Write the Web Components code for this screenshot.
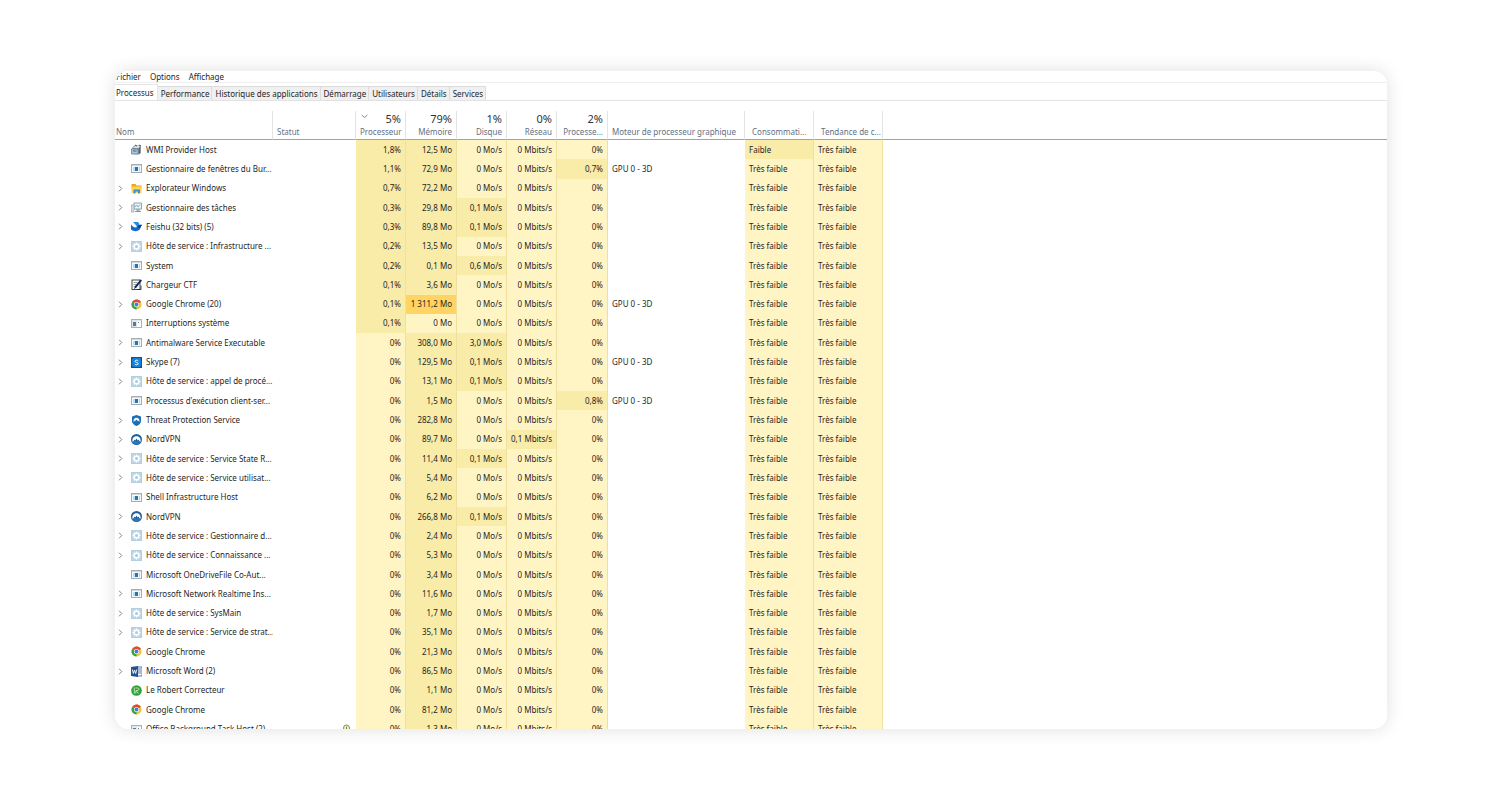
<!DOCTYPE html>
<html lang="fr">
<head>
<meta charset="utf-8">
<title>Gestionnaire des tâches</title>
<style>
  html, body { margin: 0; background: #fff; }
  body { font-family: "Noto Sans", "Open Sans", sans-serif; font-size: 8px; line-height: 12px; color: #1f1f1f; }
</style>
</head>
<body>
<task-manager>
  <menu-bar slot="menu"></menu-bar>
  <tab-strip slot="tabs"></tab-strip>
  <process-table></process-table>
</task-manager>

<script>
class TaskManager extends HTMLElement {
  constructor() {
    super();
    this.attachShadow({ mode: 'open' }).innerHTML = `
      <style>
        :host { display: flex; box-sizing: border-box; height: 100vh; padding: 71px 113px 71px 115px; }
        main { flex: 1; min-width: 0; display: flex; flex-direction: column; overflow: hidden;
               background: #fff; border-radius: 14px; }
        .shadow { flex: 1; min-width: 0; display: flex; border-radius: 14px;
                  box-shadow: 0 0 18px rgba(0, 0, 0, .13); }
      </style>
      <div class="shadow"><main>
        <slot name="menu"></slot>
        <slot name="tabs"></slot>
        <slot></slot>
      </main></div>`;
  }
}

class MenuBar extends HTMLElement {
  constructor() {
    super();
    this.attachShadow({ mode: 'open' }).innerHTML = `
      <style>
        :host { display: block; flex: none; border-bottom: 1px solid #efefef; }
        nav { display: flex; gap: 9px; height: 11px; padding-left: 1px; }
        button { all: unset; line-height: 10px; }
      </style>
      <nav><button>Fichier</button><button>Options</button><button>Affichage</button></nav>`;
  }
}

class TabStrip extends HTMLElement {
  constructor() {
    super();
    const tabs = ['Processus', 'Performance', 'Historique des applications', 'Démarrage', 'Utilisateurs', 'Détails', 'Services'];
    this.attachShadow({ mode: 'open' }).innerHTML = `
      <style>
        :host { display: block; flex: none; border-bottom: 1px solid #e2e2e2; }
        div { display: flex; align-items: flex-end; height: 17px; }
        button { all: unset; box-sizing: border-box; height: 14px; line-height: 12px; padding: 0 2px 0 3px;
                 background: #f0f0f0; border: solid #dcdcdc; border-width: 1px 1px 0 0; white-space: nowrap; }
        button[aria-selected=true] { height: 16px; padding: 0 3px 0 1px; background: #fff; border-color: #e6e6e6; }
      </style>
      <div role="tablist">${tabs.map((t, i) => `<button role="tab" aria-selected="${i === 0}">${t}</button>`).join('')}</div>`;
  }
}

const ICONS = {
  app: `<rect x=".5" y="1.500" width="10" height="8" fill="#f7f8f9" stroke="#a3adb6"/><path d="M1 2h9v1H1z" fill="#d3d9de"/><path d="M2 4h2v4H2z" fill="#c6dcea"/><path d="M4 4h3v4H4z" fill="#1879bf"/><path d="M8 4h1v4H8z" fill="#c2ccd4"/>`,
  idle: `<rect x=".5" y="1.500" width="10" height="8" fill="#e3e8ec" stroke="#a9b2b9"/><path d="M2 4h3v4H2z" fill="#587a96"/><path d="M6 3h4v6H6z" fill="#fff"/><path d="M7 4h1v1H7z" fill="#6d8190"/>`,
  wmi: `<path d="M1 4l3-3 6 0v8l-2 1.500-7-.5z" fill="#8b97a1"/><path d="M2 4l3-2.500 4.500 0L7.500 4z" fill="#dbe2e7"/><path d="M.5 5h6.500v5H.5z" fill="#a9c6d9" stroke="#5d7382" stroke-width=".7"/><path d="M2 7h3.500M8.500 3.500v6" stroke="#3c4f5d" stroke-width=".8"/><path d="M4 1l2 1M8 1l2 1" stroke="#44535e" stroke-width=".9"/>`,
  folder: `<path d="M.5 1h4l1 1.500h5V6h-10z" fill="#e8a91c"/><path d="M.5 3.500h10V10H.5z" fill="#ffd35a"/><path d="M2.500 10.500V6.500h6.500v4H7V8.500H4.500v2z" fill="#3f8fd0"/>`,
  taskmgr: `<rect x="3" y="1" width="7.500" height="6" fill="#eaf3f8" stroke="#7a929f" stroke-width=".8"/><path d="M4 5l1.500-2 1.500 2L9 2.500" fill="none" stroke="#5b98b8" stroke-width=".7"/><rect x=".5" y="3" width="2.500" height="7" fill="#d5dde1" stroke="#8f9ea7" stroke-width=".6"/><path d="M4 9.500h6M6 7v2h2V7" fill="none" stroke="#6e828e" stroke-width=".8"/>`,
  feishu: `<path d="M2 1h5c1 1 1.500 2 1.500 3L6 6C5 4 3.500 2.500 2 1z" fill="#1591e8"/><path d="M0 3.500C2 6 4 7 6 6c1.500-2 3-2.500 5-2-1 1-1.300 2.500-2 4C7.500 10.500 3 11 0 8.500z" fill="#1768cf"/><path d="M6 6c1.500-2 3-2.500 5-2-1 1-1.300 2-2 3z" fill="#10437f"/>`,
  gear: `<rect width="11" height="11" fill="#b4cfe0"/><path d="M1 1h9v9H1z" fill="#b9d5e6"/><path d="M5.500 1.500v8M1.500 5.500h8M2.700 2.700l5.600 5.600M8.300 2.700L2.700 8.300" stroke="#fff" stroke-width="1.400"/><circle cx="5.500" cy="5.500" r="2.900" fill="#fff"/><circle cx="5.500" cy="5.500" r="1.500" fill="#a9cadf"/>`,
  ctf: `<rect x="1" y="1" width="8" height="9.500" fill="#fff" stroke="#333" stroke-width=".9"/><path d="M2.500 3.500h4M2.500 5.500h3M2.500 7.500h2" stroke="#777" stroke-width=".7"/><path d="M3 10l1-3 5.500-6.500 1.500 1L5.500 8.500z" fill="#10295e"/><path d="M6 10.500h4v-4" fill="none" stroke="#222" stroke-width=".8"/>`,
  chrome: `<circle cx="5.500" cy="5.500" r="5" fill="#f4c430"/><path d="M5.500 5.500L1.170 3A5 5 0 0 1 9.830 3z" fill="#dd4b3b"/><path d="M5.500 5.500L1.170 3a5 5 0 0 0 4.330 7.500z" fill="#35a353"/><path d="M5.500 3h4.330a5 5 0 0 0-4.330-2.500z" fill="#dd4b3b"/><circle cx="5.500" cy="5.500" r="2.500" fill="#fff"/><circle cx="5.500" cy="5.500" r="1.900" fill="#3c7fe0"/>`,
  skype: `<rect width="11" height="11" fill="#1c4f86"/><rect x="1" y="1" width="9" height="9" rx="2" fill="#1583d8"/><path d="M7.300 4C6.500 2.800 4 3 4 4.300c0 1.500 3.200.8 3.200 2.400C7.200 8 4.500 8.200 3.800 7" fill="none" stroke="#fff" stroke-width="1"/>`,
  shield: `<path d="M5.500 0l4.500 1.500V6c0 2.500-2 4-4.500 5C3 10 1 8.500 1 6V1.500z" fill="#1d6fb4"/><path d="M2.700 7c-.6-2.500.8-4.300 2.800-4.300S8.900 4.500 8.300 7L7 5.300l-.5.700-1-1.500-1 1.500-.5-.7z" fill="#fff"/>`,
  nord: `<circle cx="5.500" cy="5.500" r="5.500" fill="#1f5f9f"/><path d="M1.800 8.300C.5 5 2.500 2.300 5.500 2.300S10.500 5 9.200 8.300L7.400 5.500l-.7 1-1.200-2-1.200 2-.7-1z" fill="#fff"/><path d="M2 9l2-2.500L5.500 8 7 6.500 9 9a5.500 5.500 0 0 1-7 0z" fill="#2d79bb"/>`,
  word: `<path d="M6 1h5v9H6z" fill="#fff" stroke="#2b579a" stroke-width=".8"/><path d="M7 3h3M7 5h3M7 7h3" stroke="#2b579a" stroke-width=".8"/><path d="M0 1l7-1v11l-7-1z" fill="#234f93"/><path d="M1.300 3.500l1 4 1.200-3.500 1.200 3.500 1-4" fill="none" stroke="#fff" stroke-width=".9"/>`,
  robert: `<circle cx="5.500" cy="5.500" r="5.300" fill="#2fa236"/><path d="M3.300 2.500v6M4.500 3h2.300c1.500.2 1.500 2.300 0 2.500H5l2.500 3M4.800 6v2.500" fill="none" stroke="#d8f2d6" stroke-width=".8"/>`,
  leaf: `<circle cx="5.500" cy="4" r="3" fill="#eef3d5" stroke="#75853c" stroke-width=".9"/><path d="M5.500 2.500v6" stroke="#75853c" stroke-width="1"/>`
};

class ProcessIcon extends HTMLElement {
  constructor() {
    super();
    this.attachShadow({ mode: 'open' });
  }
  connectedCallback() {
    this.shadowRoot.innerHTML = `
      <style>:host { display: block; flex: none; width: 11px; height: 11px; } svg { display: block; }</style>
      <svg width="11" height="11" viewBox="0 0 11 11" aria-hidden="true">${ICONS[this.getAttribute('name')]}</svg>`;
  }
}

/* expandable | icon | name | cpu | memory | disk | network | gpu | gpu engine */
const PROCESSES = `
|wmi|WMI Provider Host|1,8|12,5|0|0|0
|app|Gestionnaire de fenêtres du Bur...|1,1|72,9|0|0|0,7|1
>|folder|Explorateur Windows|0,7|72,2|0|0|0
>|taskmgr|Gestionnaire des tâches|0,3|29,8|0,1|0|0
>|feishu|Feishu (32 bits) (5)|0,3|89,8|0,1|0|0
>|gear|Hôte de service : Infrastructure ...|0,2|13,5|0|0|0
|app|System|0,2|0,1|0,6|0|0
|ctf|Chargeur CTF|0,1|3,6|0|0|0
>|chrome|Google Chrome (20)|0,1|1 311,2|0|0|0|1
|idle|Interruptions système|0,1|0|0|0|0
>|app|Antimalware Service Executable|0|308,0|3,0|0|0
>|skype|Skype (7)|0|129,5|0,1|0|0|1
>|gear|Hôte de service : appel de procé...|0|13,1|0,1|0|0
|app|Processus d'exécution client-ser...|0|1,5|0|0|0,8|1
>|shield|Threat Protection Service|0|282,8|0|0|0
>|nord|NordVPN|0|89,7|0|0,1|0
>|gear|Hôte de service : Service State R...|0|11,4|0,1|0|0
>|gear|Hôte de service : Service utilisat...|0|5,4|0|0|0
|app|Shell Infrastructure Host|0|6,2|0|0|0
>|nord|NordVPN|0|266,8|0,1|0|0
>|gear|Hôte de service : Gestionnaire d...|0|2,4|0|0|0
>|gear|Hôte de service : Connaissance ...|0|5,3|0|0|0
|app|Microsoft OneDriveFile Co-Aut...|0|3,4|0|0|0
>|app|Microsoft Network Realtime Ins...|0|11,6|0|0|0
>|gear|Hôte de service : SysMain|0|1,7|0|0|0
>|gear|Hôte de service : Service de strat...|0|35,1|0|0|0
|chrome|Google Chrome|0|21,3|0|0|0
>|word|Microsoft Word (2)|0|86,5|0|0|0
|robert|Le Robert Correcteur|0|1,1|0|0|0
|chrome|Google Chrome|0|81,2|0|0|0
>|idle|Office Background Task Host (2)|0|1,3|0|0|0`.trim().split('\n').map(l => l.split('|'));

class ProcessTable extends HTMLElement {
  constructor() {
    super();
    const heat = (v, unit) => {
      const n = parseFloat(v.replace(/\s/g, '').replace(',', '.'));
      return `<td class="num ${n > 1000 ? 'high' : n > 0 ? 'low' : 'none'}">${v}${unit}</td>`;
    };
    const row = ([open, icon, name, cpu, mem, disk, net, gpu, engine], i) => `
      <tr>
        <td><div class="name">${open ? '<button aria-label="Développer"><svg width="5" height="7" viewBox="0 0 5 7"><path d="M1 .7L3.800 3.500 1 6.300" fill="none" stroke="#777" stroke-width=".9"/></svg></button>' : '<i></i>'}
          <process-icon name="${icon}"></process-icon><span>${name}</span></div></td>
        <td><div class="status">${i === 30 ? '<process-icon name="leaf"></process-icon>' : ''}</div></td>
        ${heat(cpu, '%')}${heat(mem, ' Mo')}${heat(disk, ' Mo/s')}${heat(net, ' Mbits/s')}${heat(gpu, '%')}
        <td>${engine ? 'GPU 0 - 3D' : ''}</td>
        <td class="${i ? 'none' : 'low'}">${i ? 'Très faible' : 'Faible'}</td>
        <td class="none">Très faible</td><td></td>
      </tr>`;
    const total = (pct, label, sort = '') => `<th class="num" scope="col"><b>${sort}<span>${pct}</span></b>${label}</th>`;
    this.attachShadow({ mode: 'open' }).innerHTML = `
      <style>
        :host { display: block; flex: 1; min-height: 0; padding-top: 10px; overflow: hidden; }
        table { table-layout: fixed; width: 100%; height: 628px; border-spacing: 0; }
        thead tr { height: 29px; }
        th, td { padding: 0 4px; text-align: left; white-space: nowrap; overflow: hidden; }
        th { vertical-align: bottom; font-weight: 400; color: #5f7184; line-height: 12px; padding-bottom: 1px;
             border-bottom: 1px solid #a3a3a3; border-right: 1px solid #e4e4e4; }
        th:first-child { padding-left: 1px; }
        th.wide { padding-left: 7px; }
        th:last-child, td:last-child { border-right: 0; }
        b { display: flex; align-items: center; font-weight: 400; font-size: 11px; line-height: 13px; padding-bottom: 1px; color: #333; }
        b span { margin-left: auto; }
        b svg { margin: 0 0 4px 1px; }
        .num { text-align: right; }
        td { line-height: 12px; }
        td:first-child { padding: 0; }
        td.none, td.low, td.high { border-right: 1px solid #efe0a0; }
        .none { background: #fff4c4; }
        .low { background: #f9eba8; }
        .high { background: #ffd463; }
        .name { display: flex; align-items: center; }
        button, i { all: unset; flex: none; width: 13px; padding-left: 3px; }
        button svg { display: block; }
        .name span { margin-left: 4px; }
        .status { display: flex; justify-content: flex-end; }
      </style>
      <table>
        <colgroup>${[158, 83, 50, 51, 50, 50, 51, 137, 69, 69].map(w => `<col style="width:${w}px">`).join('')}<col></colgroup>
        <thead><tr>
          <th scope="col">Nom</th><th scope="col">Statut</th>
          ${total('5%', 'Processeur', '<svg width="7" height="5" viewBox="0 0 7 5"><path d="M.7 1l2.800 2.500L6.300 1" fill="none" stroke="#777" stroke-width=".9"/></svg>')}
          ${total('79%', 'Mémoire')}${total('1%', 'Disque')}${total('0%', 'Réseau')}${total('2%', 'Processe...')}
          <th scope="col">Moteur de processeur graphique</th>
          <th scope="col" class="wide">Consommati...</th><th scope="col" class="wide">Tendance de c...</th><th></th>
        </tr></thead>
        <tbody>${PROCESSES.map(row).join('')}</tbody>
      </table>`;
  }
}

customElements.define('process-icon', ProcessIcon);
customElements.define('menu-bar', MenuBar);
customElements.define('tab-strip', TabStrip);
customElements.define('process-table', ProcessTable);
customElements.define('task-manager', TaskManager);
</script>
</body>
</html>
